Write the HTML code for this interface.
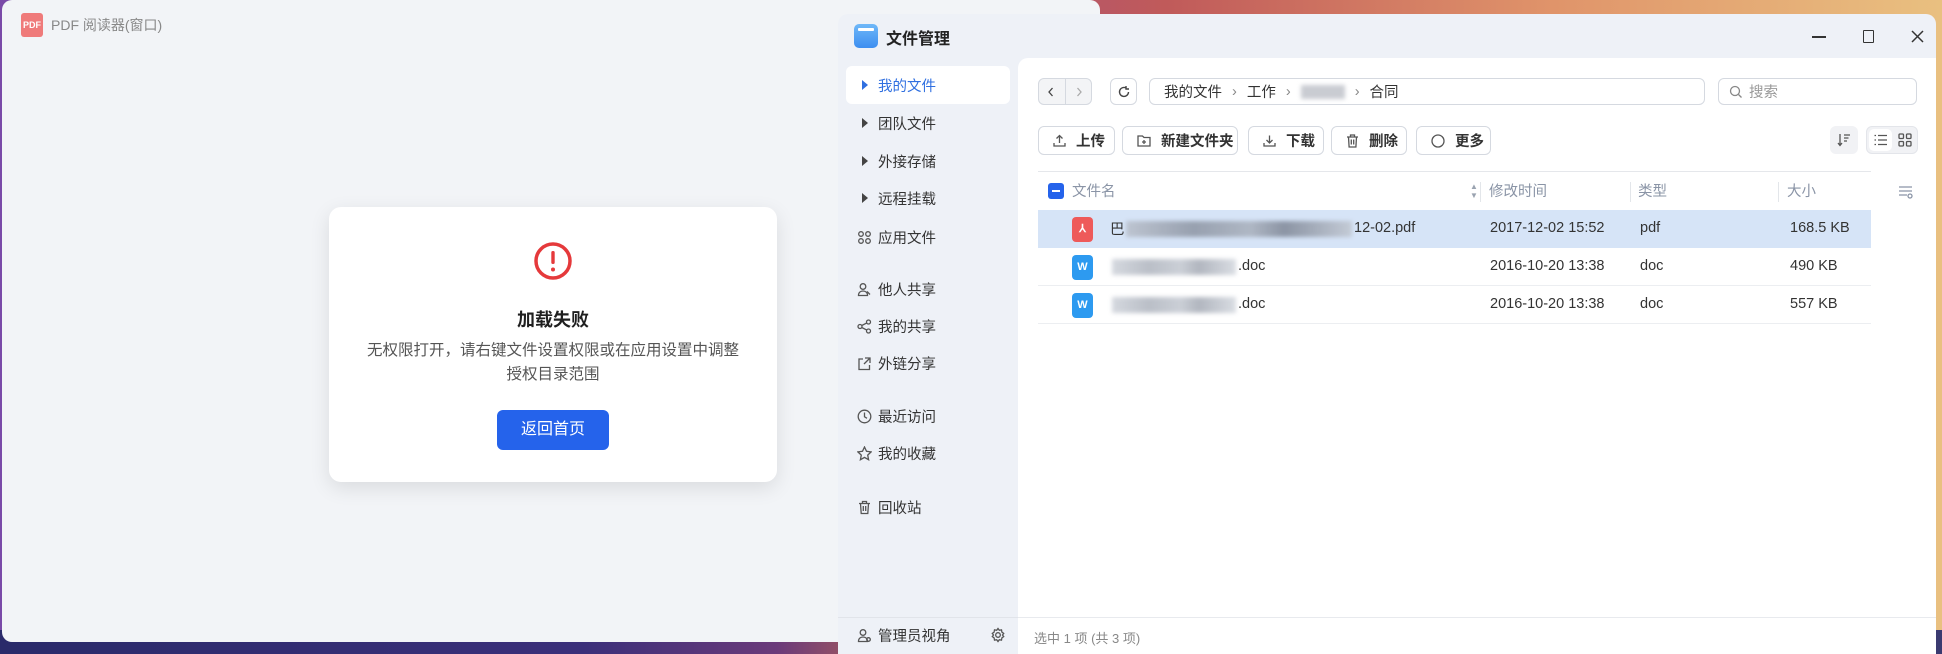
<!DOCTYPE html>
<html><head><meta charset="utf-8"><style>
*{box-sizing:border-box;margin:0;padding:0}
body{width:1942px;height:654px;overflow:hidden;position:relative;font-family:"Liberation Sans","Noto Sans CJK SC",sans-serif;background:linear-gradient(90deg,#7a4aa8 0%,#9a4d8e 40%,#c05a5a 60%,#e0946a 80%,#e9c080 100%)}
.bot{position:absolute;left:0;top:630px;width:1942px;height:24px;background:linear-gradient(90deg,#2a2a6a 0%,#3b2f7a 30%,#6b3a7a 40%,#e07a40 50%,#c06060 60%,#3a3a70 100%)}
.pdf{position:absolute;left:2px;top:0;width:1098px;height:642px;background:#f2f4f7;border-radius:10px}
.ptitle{position:absolute;left:19px;top:13px;display:flex;align-items:center;gap:8px;font-size:14px;color:#888}
.picon{width:22px;height:24px;background:#ef7a7a;border-radius:3px;color:#fff;font-size:9px;font-weight:bold;display:flex;align-items:center;justify-content:center}
.card{position:absolute;left:327px;top:207px;width:448px;height:275px;background:#fff;border-radius:12px;box-shadow:0 6px 20px rgba(0,0,0,.10);text-align:center}
.card h3{position:absolute;top:99px;width:100%;font-size:18px;color:#1f1f1f}
.card p{position:absolute;top:132px;left:20px;right:20px;font-size:15.5px;line-height:24px;color:#555}
.btn{position:absolute;left:168px;top:203px;width:112px;height:40px;background:#2563eb;border-radius:6px;color:#fff;font-size:16px;line-height:40px}
.fm{position:absolute;left:838px;top:14px;width:1098px;height:640px;background:#eef1f7;border-radius:10px 10px 0 0;overflow:hidden}
.main{position:absolute;left:180px;top:44px;right:0;bottom:0;background:#fff;border-radius:10px 0 0 0}
.fmt{position:absolute;left:48px;top:11px;font-size:16px;font-weight:bold;color:#222}
.ficon{position:absolute;left:16px;top:10px;width:24px;height:24px;border-radius:5px;background:linear-gradient(#6fb8f8,#3d8ef0)}
.ficon:after{content:"";position:absolute;left:4px;top:4px;width:16px;height:3px;background:#fff;border-radius:1px}
.side{position:absolute;left:0;top:0;width:180px}
.si{position:absolute;left:8px;width:164px;height:38px;display:flex;align-items:center;font-size:14.5px;color:#333;padding-left:32px}
.si.act{background:#fff;border-radius:6px;color:#2f6fe0}
.si .ic{position:absolute;left:11px;top:12px;width:15px;height:15px}
.tri{position:absolute;left:16px;top:14px;width:0;height:0;border-left:6px solid #444;border-top:5px solid transparent;border-bottom:5px solid transparent}
.box{position:absolute;border:1px solid #d5d9e0;border-radius:6px;background:#fff;font-size:14.5px;color:#333;display:flex;align-items:center}
.tb{top:68px;height:29px;font-weight:bold;padding-left:14px;gap:10px}
.tb svg{flex:none}
.th{position:absolute;top:122px;font-size:14.5px;color:#8a94a6}
.sep{position:absolute;top:124px;width:1px;height:20px;background:#e3e6ea}
.row{position:absolute;left:20px;width:833px;height:38px;border-bottom:1px solid #eceef1;font-size:14.5px;color:#333}
.row span{position:absolute;top:10px}
.fi{position:absolute;left:34px;top:7px;width:21px;height:25px;border-radius:4px;color:#fff;font-size:11px;font-weight:bold;text-align:center;line-height:25px}
.blur{position:absolute;top:11px;height:16px;background:linear-gradient(90deg,#b9bfca,#8d95a3 30%,#a9b0bc 55%,#7f8796 70%,#c1c7d1);filter:blur(2px);opacity:.85}
</style></head><body>
<div class="bot"></div>
<div class="pdf">
 <div class="ptitle"><div class="picon">PDF</div>PDF 阅读器(窗口)</div>
 <div class="card">
  <svg style="position:absolute;left:204px;top:34px" width="40" height="40" viewBox="0 0 40 40"><circle cx="20" cy="20" r="17" fill="none" stroke="#e5393b" stroke-width="3.5"/><rect x="18.3" y="10" width="3.4" height="13" rx="1.5" fill="#e5393b"/><circle cx="20" cy="28.5" r="2" fill="#e5393b"/></svg>
  <h3>加载失败</h3>
  <p>无权限打开，请右键文件设置权限或在应用设置中调整<br>授权目录范围</p>
  <div class="btn">返回首页</div>
 </div>
</div>
<div class="fm">
 <div class="ficon"></div><div class="fmt">文件管理</div>
 <div style="position:absolute;left:974px;top:22px;width:14px;height:2px;background:#333"></div>
 <div style="position:absolute;left:1025px;top:16px;width:11px;height:13px;border:1.5px solid #333;border-radius:1px"></div>
 <svg style="position:absolute;left:1073px;top:16px" width="13" height="13" viewBox="0 0 13 13"><path d="M1 1l11 11M12 1L1 12" stroke="#333" stroke-width="1.5"/></svg>
 <div class="side">
  <div class="si act" style="top:52px"><div class="tri" style="border-left-color:#2f6fe0"></div>我的文件</div>
  <div class="si" style="top:90px"><div class="tri"></div>团队文件</div>
  <div class="si" style="top:128px"><div class="tri"></div>外接存储</div>
  <div class="si" style="top:165px"><div class="tri"></div>远程挂载</div>
  <div class="si" style="top:204px"><svg class="ic" viewBox="0 0 15 15" fill="none" stroke="#555" stroke-width="1.3"><circle cx="4" cy="4" r="2.3"/><circle cx="11" cy="4" r="2.3"/><circle cx="4" cy="11" r="2.3"/><circle cx="11" cy="11" r="2.3"/></svg>应用文件</div>
  <div class="si" style="top:256px"><svg class="ic" viewBox="0 0 15 15" fill="none" stroke="#555" stroke-width="1.3"><circle cx="6" cy="4.5" r="2.8"/><path d="M1.5 13.5c0-3 2-4.5 4.5-4.5s4.5 1.5 4.5 4.5zM10 9.5l3 3"/></svg>他人共享</div>
  <div class="si" style="top:293px"><svg class="ic" viewBox="0 0 15 15" fill="none" stroke="#555" stroke-width="1.3"><circle cx="3" cy="7.5" r="2"/><circle cx="11.5" cy="3" r="2"/><circle cx="11.5" cy="12" r="2"/><path d="M4.8 6.5l5-2.6M4.8 8.5l5 2.6"/></svg>我的共享</div>
  <div class="si" style="top:330px"><svg class="ic" viewBox="0 0 15 15" fill="none" stroke="#555" stroke-width="1.3"><path d="M6 3H2v10.5h10.5V9M8 2h5v5M13 2L7 8"/></svg>外链分享</div>
  <div class="si" style="top:383px"><svg class="ic" viewBox="0 0 15 15" fill="none" stroke="#555" stroke-width="1.3"><circle cx="7.5" cy="7.5" r="6.3"/><path d="M7.5 3.5v4.3l2.5 1.5"/></svg>最近访问</div>
  <div class="si" style="top:420px"><svg class="ic" viewBox="0 0 15 15" fill="none" stroke="#555" stroke-width="1.3"><path d="M7.5 1l2 4.3 4.6.6-3.4 3.2.9 4.6-4.1-2.3-4.1 2.3.9-4.6L.9 5.9l4.6-.6z"/></svg>我的收藏</div>
  <div class="si" style="top:474px"><svg class="ic" viewBox="0 0 15 15" fill="none" stroke="#555" stroke-width="1.3"><path d="M2 3.5h11M5.5 3.5V1.5h4v2M3.5 3.5l.7 10h6.6l.7-10M6.3 6v5M8.7 6v5"/></svg>回收站</div>
  <div style="position:absolute;left:0;top:603px;width:180px;height:1px;background:#e1e4ea"></div>
  <div class="si" style="top:602px"><svg class="ic" viewBox="0 0 15 15" fill="none" stroke="#555" stroke-width="1.3"><circle cx="6" cy="4.5" r="2.8"/><path d="M1.5 13.5c0-3 2-4.5 4.5-4.5s4.5 1.5 4.5 4.5z"/><circle cx="11.5" cy="11.5" r="1.8"/></svg>管理员视角<svg style="position:absolute;left:144px;top:11px" width="16" height="16" viewBox="0 0 16 16" fill="none" stroke="#555" stroke-width="1.3"><circle cx="8" cy="8" r="2.3"/><path d="M8 1.5l1.3 1.8 2.2-.4.4 2.2 1.8 1.3-1.2 1.6 1.2 1.6-1.8 1.3-.4 2.2-2.2-.4L8 14.5l-1.3-1.8-2.2.4-.4-2.2L2.3 9.6 3.5 8 2.3 6.4l1.8-1.3.4-2.2 2.2.4z"/></svg></div>
 </div>
 <div class="main">
  <div class="box" style="left:20px;top:20px;width:54px;height:27px;background:#f3f4f6"><svg style="position:absolute;left:8px;top:8px" width="8" height="10" viewBox="0 0 8 10"><path d="M5.5 1L2 5l3.5 4" stroke="#444" stroke-width="1.3" fill="none"/></svg><span style="position:absolute;left:26px;top:0;width:1px;height:25px;background:#d5d9e0"></span><svg style="position:absolute;left:36px;top:8px" width="8" height="10" viewBox="0 0 8 10"><path d="M2.5 1L6 5 2.5 9" stroke="#aaa" stroke-width="1.3" fill="none"/></svg></div>
  <div class="box" style="left:92px;top:20px;width:27px;height:27px;justify-content:center"><svg width="14" height="14" viewBox="0 0 14 14" fill="none" stroke="#444" stroke-width="1.4"><path d="M11.5 7A4.5 4.5 0 1 1 9.5 3.2M9 1v3h3"/></svg></div>
  <div class="box" style="left:131px;top:20px;width:556px;height:27px;padding-left:14px;gap:10px">我的文件 <span style="color:#888">›</span> 工作 <span style="color:#888">›</span> <span style="display:inline-block;width:44px;height:14px;background:#c9ccd2;filter:blur(2px)"></span> <span style="color:#888">›</span> 合同</div>
  <div class="box" style="left:700px;top:20px;width:199px;height:27px;padding-left:10px;color:#999;gap:6px"><svg width="14" height="14" viewBox="0 0 14 14"><circle cx="6" cy="6" r="4.5" fill="none" stroke="#888" stroke-width="1.3"/><path d="M9.5 9.5l3 3" stroke="#888" stroke-width="1.3"/></svg>搜索</div>
  <div class="box tb" style="left:20px;width:77px"><svg width="13" height="13" viewBox="0 0 13 13" fill="none" stroke="#555" stroke-width="1.3"><path d="M6.5 9V1.5M3.5 4.5l3-3 3 3M1 9v3h11V9"/></svg>上传</div>
  <div class="box tb" style="left:104px;width:116px"><svg width="14" height="13" viewBox="0 0 14 13" fill="none" stroke="#555" stroke-width="1.3"><path d="M1 2h4.5l1.5 1.5h6V12H1zM7 6v4M5 8h4"/></svg>新建文件夹</div>
  <div class="box tb" style="left:230px;width:76px"><svg width="13" height="13" viewBox="0 0 13 13" fill="none" stroke="#555" stroke-width="1.3"><path d="M6.5 1.5V9M3.5 6l3 3 3-3M1 9v3h11V9"/></svg>下载</div>
  <div class="box tb" style="left:313px;width:76px"><svg width="13" height="14" viewBox="0 0 13 14" fill="none" stroke="#555" stroke-width="1.3"><path d="M1 3h11M4.5 3V1h4v2M2.5 3l.6 10h6.8l.6-10M5.3 5.5v5M7.7 5.5v5"/></svg>删除</div>
  <div class="box tb" style="left:398px;width:75px"><svg width="14" height="14" viewBox="0 0 14 14" fill="none" stroke="#555" stroke-width="1.3"><circle cx="7" cy="7" r="6"/></svg>更多</div>
  <div style="position:absolute;left:812px;top:68px;width:28px;height:28px;background:#f1f2f5;border-radius:6px"><svg style="position:absolute;left:7px;top:7px" width="14" height="14" viewBox="0 0 14 14" fill="none" stroke="#555" stroke-width="1.3"><path d="M3 1v11M1 10l2 2.5L5 10M7 2h6M7 5h4.5M7 8h3"/></svg></div>
  <div style="position:absolute;left:848px;top:68px;width:52px;height:28px;background:#f1f2f5;border-radius:6px;border:1px solid #e3e5ea"><div style="position:absolute;left:2px;top:2px;width:23px;height:22px;background:#fff;border-radius:5px"><svg style="position:absolute;left:5px;top:5px" width="13" height="12" viewBox="0 0 13 12" fill="none" stroke="#555" stroke-width="1.3"><path d="M4 1.5h9M4 6h9M4 10.5h9M0.5 1.5h1.5M0.5 6h1.5M0.5 10.5h1.5"/></svg></div><svg style="position:absolute;left:31px;top:6px" width="14" height="14" viewBox="0 0 14 14" fill="none" stroke="#555" stroke-width="1.3"><rect x="1" y="1" width="4.5" height="4.5" rx="1"/><rect x="8.5" y="1" width="4.5" height="4.5" rx="1"/><rect x="1" y="8.5" width="4.5" height="4.5" rx="1"/><rect x="8.5" y="8.5" width="4.5" height="4.5" rx="1"/></svg></div>
  <div style="position:absolute;left:20px;top:113px;width:833px;height:1px;background:#e5e7eb"></div>
  <div style="position:absolute;left:30px;top:125px;width:16px;height:16px;background:#2563eb;border-radius:3px"><div style="position:absolute;left:4px;top:7px;width:8px;height:2px;background:#fff"></div></div>
  <div class="th" style="left:54px">文件名</div>
  <div style="position:absolute;left:452px;top:124px;color:#9aa3b0;font-size:8px;line-height:9px">▲<br>▼</div>
  <div class="sep" style="left:462px"></div><div class="th" style="left:471px">修改时间</div>
  <div class="sep" style="left:612px"></div><div class="th" style="left:620px">类型</div>
  <div class="sep" style="left:760px"></div><div class="th" style="left:769px">大小</div>
  <svg style="position:absolute;left:880px;top:127px" width="16" height="14" viewBox="0 0 16 14" fill="none" stroke="#8a94a6" stroke-width="1.3"><path d="M1 2h13M1 6h13M1 10h8"/><circle cx="12" cy="11" r="2"/></svg>
  <div class="row" style="top:152px;background:#d6e4f7;border-bottom:none"><div class="fi" style="background:#ee5a5a">⅄</div><span style="left:72px;font-family:'Noto Sans CJK SC',sans-serif;top:8px">巴</span><div class="blur" style="left:88px;width:226px"></div><span style="left:316px">12-02.pdf</span><span style="left:452px">2017-12-02 15:52</span><span style="left:602px">pdf</span><span style="left:752px">168.5 KB</span></div>
  <div class="row" style="top:190px"><div class="fi" style="background:#2d9af0">W</div><div class="blur" style="left:74px;width:124px;opacity:.6"></div><span style="left:200px">.doc</span><span style="left:452px">2016-10-20 13:38</span><span style="left:602px">doc</span><span style="left:752px">490 KB</span></div>
  <div class="row" style="top:228px"><div class="fi" style="background:#2d9af0">W</div><div class="blur" style="left:74px;width:124px;opacity:.6"></div><span style="left:200px">.doc</span><span style="left:452px">2016-10-20 13:38</span><span style="left:602px">doc</span><span style="left:752px">557 KB</span></div>
  <div style="position:absolute;left:0;top:559px;right:0;height:1px;background:#e8eaee"></div>
  <div style="position:absolute;left:16px;top:570px;font-size:13px;color:#888">选中 1 项 (共 3 项)</div>
 </div>
</div>
</body></html>
